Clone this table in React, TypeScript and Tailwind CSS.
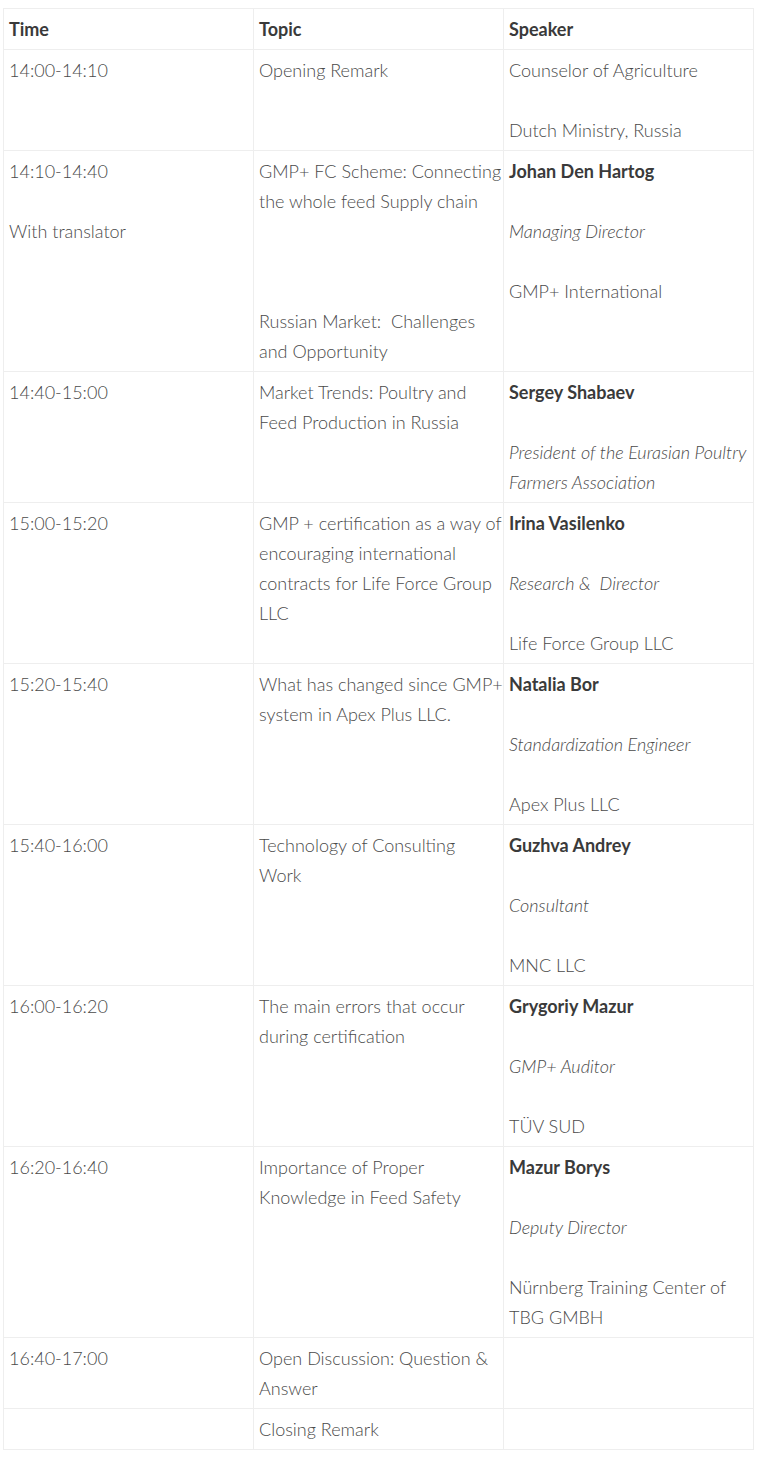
import React from "react";

type Line = { t: string; b?: boolean; i?: boolean } | null;
type Row = [Line[], Line[], Line[]];

const L = (t: string): Line => ({ t });
const B = (t: string): Line => ({ t, b: true });
const I = (t: string): Line => ({ t, i: true });
const _ = null;

const rows: Row[] = [
  [[L("14:00-14:10")], [L("Opening Remark")], [L("Counselor of Agriculture"), _, L("Dutch Ministry, Russia")]],
  [
    [L("14:10-14:40"), _, L("With translator")],
    [L("GMP+ FC Scheme: Connecting"), L("the whole feed Supply chain"), _, _, _, L("Russian Market:\u00a0 Challenges"), L("and Opportunity")],
    [B("Johan Den Hartog"), _, I("Managing Director"), _, L("GMP+ International")],
  ],
  [
    [L("14:40-15:00")],
    [L("Market Trends: Poultry and"), L("Feed Production in Russia")],
    [B("Sergey Shabaev"), _, I("President of the Eurasian Poultry"), I("Farmers Association")],
  ],
  [
    [L("15:00-15:20")],
    [L("GMP + certification as a way of"), L("encouraging international"), L("contracts for Life Force Group"), L("LLC")],
    [B("Irina Vasilenko"), _, I("Research &\u00a0 Director"), _, L("Life Force Group LLC")],
  ],
  [
    [L("15:20-15:40")],
    [L("What has changed since GMP+"), L("system in Apex Plus LLC.")],
    [B("Natalia Bor"), _, I("Standardization Engineer"), _, L("Apex Plus LLC")],
  ],
  [
    [L("15:40-16:00")],
    [L("Technology of Consulting"), L("Work")],
    [B("Guzhva Andrey"), _, I("Consultant"), _, L("MNC LLC")],
  ],
  [
    [L("16:00-16:20")],
    [L("The main errors that occur"), L("during certification")],
    [B("Grygoriy Mazur"), _, I("GMP+ Auditor"), _, L("TÜV SUD")],
  ],
  [
    [L("16:20-16:40")],
    [L("Importance of Proper"), L("Knowledge in Feed Safety")],
    [B("Mazur Borys"), _, I("Deputy Director"), _, L("Nürnberg Training Center of"), L("TBG GMBH")],
  ],
  [[L("16:40-17:00")], [L("Open Discussion: Question &"), L("Answer")], []],
  [[], [L("Closing Remark")], []],
];

function Cell({ lines }: { lines: Line[] }) {
  return (
    <div className="border-r border-b border-[#eeeeee] p-[5px]">
      {lines.map((ln, k) =>
        ln === null ? (
          <div key={k} className="h-[30px]" />
        ) : (
          <div
            key={k}
            className={
              "h-[30px] whitespace-nowrap leading-[30px] " +
              (ln.b ? "font-bold text-[#3a3a3a]" : "font-light text-[#4a4a4a]") +
              (ln.i ? " italic" : "")
            }
          >
            {ln.t}
          </div>
        )
      )}
    </div>
  );
}

export default function App() {
  return (
    <div className="min-h-[1459px] bg-white pt-[8px] pl-[3px]" style={{ fontFamily: "Lato, 'Open Sans', sans-serif" }}>
      <div className="grid w-[751px] grid-cols-[250px_250px_250px] border-l border-t border-[#eeeeee] text-[18px]">
        {["Time", "Topic", "Speaker"].map((h) => (
          <div key={h} className="border-r border-b border-[#eeeeee] p-[5px]">
            <div className="h-[30px] font-bold leading-[30px] text-[#3a3a3a]">{h}</div>
          </div>
        ))}
        {rows.map((r, i) => (
          <React.Fragment key={i}>
            <Cell lines={r[0]} />
            <Cell lines={r[1]} />
            <Cell lines={r[2]} />
          </React.Fragment>
        ))}
      </div>
    </div>
  );
}
